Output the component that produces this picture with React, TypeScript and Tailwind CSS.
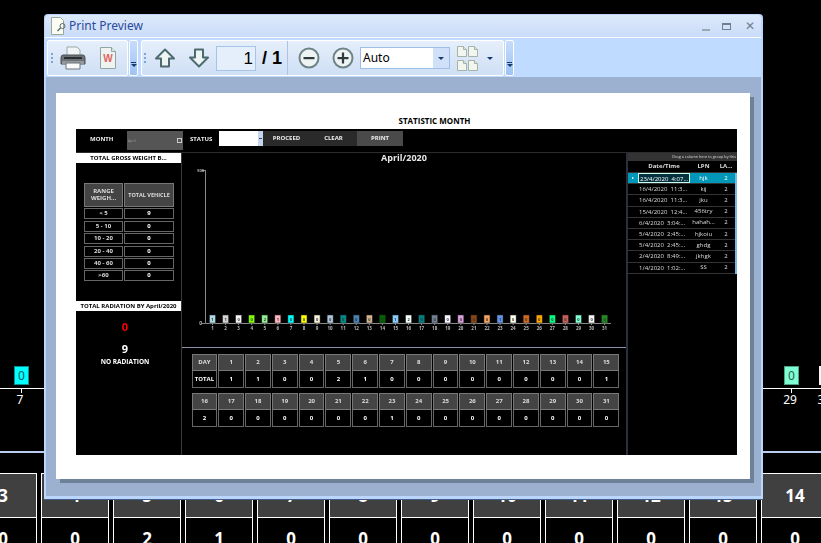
import React from 'react';

const ui = "font-['Noto_Sans',sans-serif]";

const days = [
  ['#add8e6', 1], ['#d3d3d3', 1], ['#f5f5f5', 0], ['#7cfc00', 0], ['#90ee90', 2], ['#ffb6c1', 1],
  ['#00ffff', 0], ['#ffff00', 0], ['#f5f5dc', 0], ['#b0c4de', 0], ['#008b8b', 0], ['#4682b4', 0],
  ['#d2b48c', 0], ['#006400', 0], ['#87cefa', 1], ['#f5fffa', 2], ['#008080', 0], ['#708090', 0],
  ['#f8f8ff', 0], ['#dda0dd', 0], ['#8b4513', 0], ['#f4a460', 0], ['#6495ed', 1], ['#fffff0', 0],
  ['#d2691e', 0], ['#ffa500', 0], ['#00ff7f', 0], ['#cd5c5c', 0], ['#7fffd4', 0], ['#f5f5f5', 0],
  ['#228b22', 0],
] as const;

const weights = [
  ['< 5', 9], ['5 - 10', 0], ['10 - 20', 0], ['20 - 40', 0], ['40 - 60', 0], ['>60', 0],
];

const records = [
  ['23/4/2020  4:07...', 'hjk'],
  ['16/4/2020  11:3...', 'kij'],
  ['16/4/2020  11:3...', 'jku'],
  ['15/4/2020  12:4...', '456try'],
  ['6/4/2020  3:04:...', 'hahah...'],
  ['5/4/2020  2:45:...', 'hjkoiu'],
  ['5/4/2020  2:45:...', 'ghdg'],
  ['2/4/2020  8:49:...', 'jkhgk'],
  ['1/4/2020  1:02:...', 'SS'],
];

function Backdrop() {
  const cells = [
    ['3', '0'], ['4', '0'], ['5', '2'], ['6', '1'], ['7', '0'], ['8', '0'],
    ['9', '0'], ['10', '0'], ['11', '0'], ['12', '0'], ['13', '0'], ['14', '0'],
  ];
  return (
    <>
      <div className="absolute left-0 top-[388px] w-full h-px bg-white" />
      <div className="absolute left-0 top-[451px] w-full h-[2px] bg-[#b9cdf0]" />
      <div className="absolute left-[14px] top-[366px] w-[15px] h-[19px] bg-[#00ffff] border border-[#0b8f8f] text-[12px] text-[#0a5a5a] flex items-center justify-center">0</div>
      <div className="absolute left-[21px] top-[388px] w-px h-[5px] bg-white" />
      <div className="absolute left-[13px] top-[393px] w-[14px] text-center text-[12px] leading-[14px] text-white">7</div>
      <div className="absolute left-[784px] top-[366px] w-[15px] h-[19px] bg-[#7fffd4] border border-[#4f9f86] text-[12px] text-[#2d5a4b] flex items-center justify-center">0</div>
      <div className="absolute left-[791px] top-[388px] w-px h-[5px] bg-white" />
      <div className="absolute left-[780px] top-[393px] w-[20px] text-center text-[12px] leading-[14px] text-white">29</div>
      <div className="absolute left-[819px] top-[366px] w-[16px] h-[19px] bg-[#f5f5f5]" />
      <div className="absolute left-[815px] top-[393px] w-[12px] text-center text-[12px] leading-[14px] text-white">3</div>
      <div className="absolute left-[-31px] top-[473px] flex gap-[4px]">
        {cells.map(([d, v]) => (
          <div key={d} className="w-[68px] shrink-0 border-x border-white text-white font-bold">
            <div className="h-[45px] bg-[#404040] border-y border-white flex items-center justify-center text-[17px]">{d}</div>
            <div className="h-[40px] pt-[8px] text-center text-[17px]">{v}</div>
          </div>
        ))}
      </div>
    </>
  );
}

function Grip() {
  return (
    <div className="w-[3px] flex flex-col gap-[2px] shrink-0">
      <span className="w-[2px] h-[2px] bg-[#7ba3dc]" />
      <span className="w-[2px] h-[2px] bg-[#7ba3dc]" />
      <span className="w-[2px] h-[2px] bg-[#7ba3dc]" />
    </div>
  );
}

function Overflow() {
  return (
    <div className="w-[9px] h-[36px] mx-px border border-white rounded-[2px] bg-gradient-to-b from-[#c7dcfb] to-[#9fc3f3] flex flex-col items-center justify-end pb-[8px] gap-px shrink-0">
      <span className="w-[5px] h-px bg-[#15396e]" />
      <span className="w-0 h-0 border-x-[3px] border-x-transparent border-t-[3px] border-t-[#15396e]" />
    </div>
  );
}

function DocIcon() {
  return (
    <svg width="18" height="24" viewBox="0 0 18 24">
      <path d="M1.5 1.5h11l4 4v17h-15z" fill="#eef3f1" stroke="#8fa6a3" />
      <path d="M12.5 1.5v4h4" fill="#dfe8e6" stroke="#8fa6a3" />
      <text x="9" y="16" textAnchor="middle" fontSize="10" fontWeight="700" fill="#e0645f" fontFamily="Liberation Sans, sans-serif">W</text>
    </svg>
  );
}

function PrinterIcon() {
  return (
    <svg width="26" height="24" viewBox="0 0 26 24">
      <path d="M7 1h10l3 3v6H7z" fill="#f2f5f5" stroke="#9aa8a8" />
      <path d="M3 9h20q2 0 2 3v6H1v-6q0-3 2-3z" fill="#6e7276" stroke="#4b5055" />
      <rect x="4" y="11" width="18" height="2" fill="#2a2d31" />
      <rect x="2" y="15" width="22" height="3" fill="#93989c" />
      <path d="M6 17h14v6H6z" fill="#fbfbfb" stroke="#6c7478" />
    </svg>
  );
}

function ArrowIcon({ down = false }: { down?: boolean }) {
  return (
    <svg width="20" height="20" viewBox="0 0 20 20" className={down ? 'rotate-180' : ''}>
      <path d="M10 1.5L19 10.5H14V18.5H6V10.5H1Z" fill="#eef4f3" stroke="#4d6a6e" strokeWidth="2" strokeLinejoin="round" />
    </svg>
  );
}

function ZoomIcon({ plus = false }: { plus?: boolean }) {
  return (
    <svg width="22" height="22" viewBox="0 0 22 22">
      <circle cx="11" cy="11" r="9.5" fill="#eef3f3" stroke="#6d8587" strokeWidth="2" />
      <rect x="5.5" y="10" width="11" height="2.2" fill="#2f3a3c" />
      {plus && <rect x="9.9" y="5.5" width="2.2" height="11" fill="#2f3a3c" />}
    </svg>
  );
}

function TinyPage() {
  return (
    <svg width="10" height="11" viewBox="0 0 10 11">
      <path d="M.5.5h6l3 3v7h-9z" fill="#f3f6ef" stroke="#a3b3aa" />
      <path d="M6.5.5v3h3" fill="#dfe6dd" stroke="#a3b3aa" />
    </svg>
  );
}

function PreviewIcon() {
  return (
    <svg width="17" height="18" viewBox="0 0 17 18">
      <path d="M.5.5h9l3 3v14H.5z" fill="#fbfcf4" stroke="#9aa89a" />
      <circle cx="11.5" cy="9" r="2.5" fill="none" stroke="#5d6a6a" />
      <path d="M9.5 11l-3 3" stroke="#5d6a6a" strokeWidth="1.5" />
    </svg>
  );
}

function Toolbar() {
  return (
    <div className="h-[39px] bg-[#bfdbff] flex items-start pl-[3px] pt-[2px] shrink-0">
      <div className="w-[81px] h-[36px] border border-white rounded-[2px] bg-gradient-to-b from-[#e6effb] to-[#cfdff5] flex items-center pl-[3px]">
        <Grip />
        <div className="ml-[6px]"><PrinterIcon /></div>
        <div className="ml-[13px]"><DocIcon /></div>
      </div>
      <Overflow />
      <div className="w-[2px]" />
      <div className="w-[363px] h-[36px] border border-white rounded-[2px] bg-gradient-to-b from-[#e6effb] to-[#cfdff5] flex items-center pl-[2px]">
        <Grip />
        <div className="ml-[8px]"><ArrowIcon /></div>
        <div className="ml-[14px]"><ArrowIcon down /></div>
        <div className="ml-[7px] w-[40px] h-[25px] bg-[#e5effb] border border-[#a6c4e8] text-right pr-[2px] text-[17px] leading-[23px] text-black font-['Liberation_Sans',sans-serif]">1</div>
        <div className="ml-[6px] w-[25px] text-[18px] leading-[22px] font-bold text-black whitespace-nowrap font-['Liberation_Sans',sans-serif]">/ 1</div>
        <div className="w-px h-[34px] bg-[#a9c4e6]" />
        <div className="ml-[10px]"><ZoomIcon /></div>
        <div className="ml-[12px]"><ZoomIcon plus /></div>
        <div className={`ml-[6px] w-[90px] h-[22px] bg-white border border-[#9ebfe8] flex items-center justify-between ${ui}`}>
          <span className="pl-[2px] text-[12px] text-black">Auto</span>
          <span className="w-[16px] h-[20px] bg-[#cfe0f8] flex items-center justify-center">
            <span className="w-0 h-0 border-x-[3px] border-x-transparent border-t-[3px] border-t-[#15396e]" />
          </span>
        </div>
        <div className="ml-[7px] grid grid-cols-2 gap-x-px gap-y-[3px]">
          <TinyPage /><TinyPage /><TinyPage /><TinyPage />
        </div>
        <span className="ml-[9px] w-0 h-0 border-x-[3px] border-x-transparent border-t-[3px] border-t-[#15396e]" />
      </div>
      <Overflow />
    </div>
  );
}

function Chart() {
  const barX = (i: number) => 30.5 + i * 13.07;
  return (
    <svg width="444" height="194" viewBox="0 0 444 194" className="block font-['Open_Sans',sans-serif]">
      <text x="222" y="8" textAnchor="middle" fontSize="9" fontWeight="700" fill="#e8e8e8">April/2020</text>
      <path d="M23.5 17V170.5H429" fill="none" stroke="#8a8a8a" />
      <path d="M20 17.5h3M20 170.5h3" stroke="#8a8a8a" />
      <text x="22" y="19" textAnchor="end" fontSize="4" fill="#bbb">500</text>
      <text x="20" y="172" textAnchor="end" fontSize="5" fill="#bbb">0</text>
      {days.map(([color, value], i) => (
        <g key={i}>
          <rect x={barX(i) - 3} y="162" width="6" height="8" fill={color} stroke="#222" strokeWidth="0.5" />
          <text x={barX(i)} y="168" textAnchor="middle" fontSize="4" fill="#333">{value}</text>
          <path d={`M${barX(i)} 170v2`} stroke="#888" />
          <text x={barX(i)} y="177" textAnchor="middle" fontSize="4.5" fill="#bbb">{i + 1}</text>
        </g>
      ))}
    </svg>
  );
}

function DayGrid({ first, labels, values }: { first?: string; labels: (string | number)[]; values: number[] }) {
  const head = first ? [first, ...labels] : labels;
  const vals = first ? ['TOTAL', ...values] : values;
  return (
    <div className="grid grid-cols-[repeat(16,26.8px)]">
      {head.map((d) => (
        <div key={d} className="h-[17px] mx-[0.5px] bg-[#444] border border-[#777] flex items-center justify-center text-[#ddd]">{d}</div>
      ))}
      {vals.map((v, i) => (
        <div key={i} className="h-[17px] mx-[0.5px] bg-black border border-t-0 border-[#666] flex items-center justify-center text-white">{v}</div>
      ))}
    </div>
  );
}

function Report() {
  return (
    <div className="w-[661px] h-[326px] bg-black flex flex-col text-[6px] font-bold font-['Open_Sans',sans-serif] blur-[0.3px]">
      <div className="h-[24px] border-b border-[#2c2c2c] flex items-start pt-[2px] text-[#eee] shrink-0">
        <span className="w-[51px] pl-[14px] pt-[4px]">MONTH</span>
        <div className="w-[56px] h-[19px] bg-[#555] flex items-center justify-between px-[1px]">
          <span className="text-[3.5px] font-normal text-[#999]">April</span>
          <span className="w-[5px] h-[5px] border border-[#ccc]" />
        </div>
        <span className="w-[36px] pl-[7px] pt-[4px]">STATUS</span>
        <div className="w-[44px] h-[15px] bg-white flex justify-end">
          <span className="w-[5px] bg-[#c5d6ee] flex items-center justify-center">
            <span className="w-[3px] h-px bg-[#445]" />
          </span>
        </div>
        <div className="w-[94px] h-[15px] bg-[#2a2a2a] flex items-center">
          <span className="w-[47px] text-center">PROCEED</span>
          <span className="w-[47px] text-center">CLEAR</span>
        </div>
        <div className="w-[46px] h-[15px] bg-[#4a4a4a] flex items-center justify-center">PRINT</div>
      </div>
      <div className="flex-1 flex">
        <div className="w-[106px] flex flex-col border-r border-[#3a3a3a] shrink-0">
          <div className="h-[10px] bg-white text-black flex items-center justify-center">TOTAL GROSS WEIGHT B...</div>
          <div className="h-[138px] pl-[8px] pt-[20px]">
            <div className="grid grid-cols-[39px_50px] gap-x-px gap-y-[1.4px] grid-rows-[24px_repeat(6,11px)] text-white">
              <div className="bg-[#444] border border-[#777] flex items-center justify-center text-center leading-[7px] text-[#ddd]">RANGE<br />WEIGH...</div>
              <div className="bg-[#444] border border-[#777] flex items-center justify-center text-[#ddd] whitespace-nowrap text-[5.5px]">TOTAL VEHICLE</div>
              {weights.map(([range, total]) => (
                <React.Fragment key={range}>
                  <div className="border border-[#666] flex items-center justify-center text-[#ddd]">{range}</div>
                  <div className="border border-[#666] flex items-center justify-center">{total}</div>
                </React.Fragment>
              ))}
            </div>
          </div>
          <div className="h-[10px] bg-white text-black flex items-center justify-center whitespace-nowrap">TOTAL RADIATION BY April/2020</div>
          <div className="flex-1 flex flex-col items-center text-white pr-[7px]">
            <span className="mt-[9px] text-[11px] leading-[14px] text-[#ff0000]">0</span>
            <span className="mt-[8px] text-[11px] leading-[14px]">9</span>
            <span className="mt-px text-[6.5px] leading-[10px]">NO RADIATION</span>
          </div>
        </div>
        <div className="w-[446px] flex flex-col border-r-2 border-[#2b2f3c] shrink-0">
          <div className="h-[194px] shrink-0"><Chart /></div>
          <div className="flex-1 border-t border-[#8a8fa8] pl-[9px] pt-[6px]">
            <DayGrid first="DAY" labels={days.slice(0, 15).map((_, i) => i + 1)} values={days.slice(0, 15).map((d) => d[1])} />
            <div className="mt-[5px]">
              <DayGrid labels={days.slice(15).map((_, i) => i + 16)} values={days.slice(15).map((d) => d[1])} />
            </div>
          </div>
        </div>
        <div className="flex-1 min-w-0 flex flex-col font-normal text-[6px] text-[#ddd]">
          <div className="h-[8px] bg-[#333] text-[3.8px] leading-[8px] text-right pr-[1px] whitespace-nowrap overflow-hidden">Drag a column here to group by this</div>
          <div className="h-[12px] flex items-center font-bold border-b border-[#333]">
            <span className="w-[10px]" />
            <span className="w-[52px] text-center">Date/Time</span>
            <span className="w-[27px] text-center">LPN</span>
            <span className="w-[18px] text-center">LA...</span>
          </div>
          <div className="border-r-2 border-[#6fb8e8] w-[109px]">
            {records.map(([date, lpn], i) => (
              <div key={date + lpn} className={`h-[11.2px] flex items-center border-b border-[#333] ${i === 0 ? 'bg-[#0097b8] text-white' : ''}`}>
                <span className="w-[10px] text-center text-[4px]">{i === 0 ? '▸' : ''}</span>
                <span className={`w-[52px] h-full pl-[1px] leading-[10px] whitespace-pre overflow-hidden ${i === 0 ? 'border border-[#cfe] bg-[#04323e]' : ''}`}>{date}</span>
                <span className="w-[27px] text-center whitespace-nowrap">{lpn}</span>
                <span className="w-[18px] text-center">2</span>
              </div>
            ))}
          </div>
        </div>
      </div>
    </div>
  );
}

export default function App() {
  return (
    <div className="relative w-[821px] h-[543px] bg-black overflow-hidden font-['Noto_Sans',sans-serif]">
      <Backdrop />
      <div className="absolute left-[44px] top-[14px] w-[719px] h-[486px] flex flex-col rounded-t-[4px] overflow-hidden bg-[#bcd6fb] border-b border-[#3f5f88] pb-[3px] pr-[2px]">
        <div className="h-[23px] shrink-0 flex items-center bg-gradient-to-b from-[#dde9fb] to-[#c9dcf8] border-b border-white pl-[6px] ml-px mt-px rounded-t-[4px]">
          <PreviewIcon />
          <span className={`ml-[1px] text-[12px] text-[#2b4a9b] ${ui}`}>Print Preview</span>
          <div className="ml-auto flex items-center pr-[6px]">
            <span className="w-[8px] h-[2px] mt-[8px] bg-[#9aa8b4]" />
            <span className="ml-[12px] w-[9px] h-[7px] border border-[#6f7f90] border-t-2" />
            <span className="ml-[14px] text-[12px] leading-none text-[#6f7f90]">✕</span>
          </div>
        </div>
        <Toolbar />
        <div className="flex-1 min-h-0 ml-[2px] bg-[#9cb0cf] pl-[10px] pt-[16px]">
          <div className="w-[694px] h-[386px] bg-white shadow-[4px_4px_0_#6d8299] pl-[20px] pt-[24px]">
            <div className="w-[661px] h-[12px] pl-[56px] text-center text-[8px] leading-[8px] font-bold text-black font-['Open_Sans',sans-serif]">STATISTIC MONTH</div>
            <Report />
          </div>
        </div>
      </div>
    </div>
  );
}
